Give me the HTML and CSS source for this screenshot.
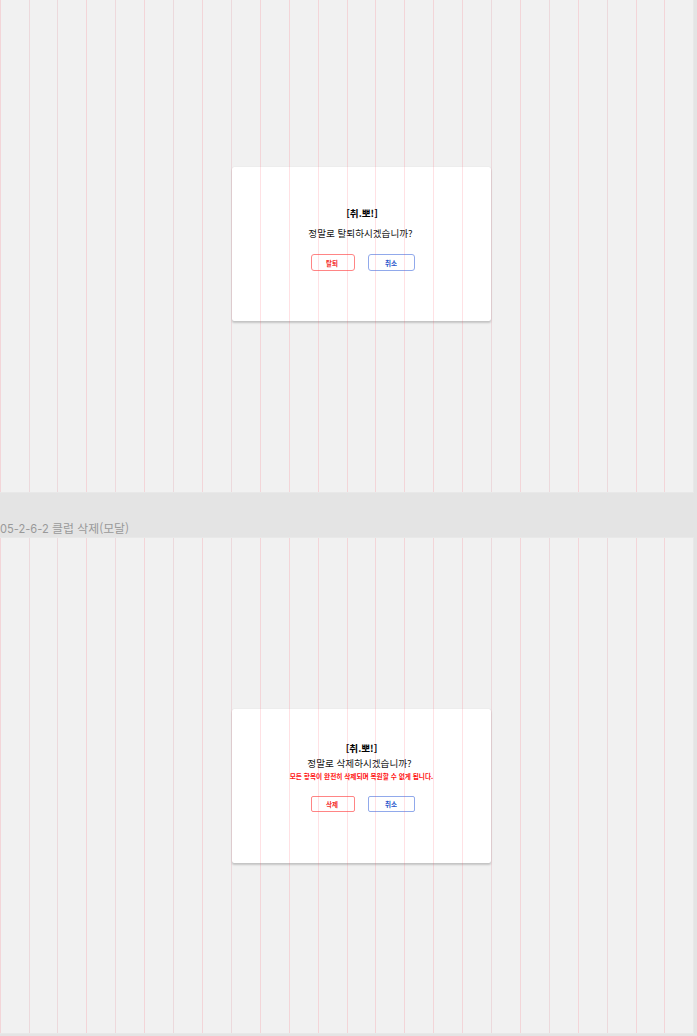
FILE: index.html
```html
<!DOCTYPE html>
<html lang="ko">
<head>
<meta charset="utf-8">
<title>클럽 모달</title>
<link rel="stylesheet" href="styles.css">
</head>
<body>
<section class="frame frame-leave">
  <div class="card">
    <h2 class="club">[취.뽀!]</h2>
    <p class="question">정말로 탈퇴하시겠습니까?</p>
    <div class="actions"><button class="btn danger">탈퇴</button><button class="btn cancel">취소</button></div>
  </div>
  <div class="columns"><i></i><i class="dim"></i><i class="dim"></i><i></i><i class="mid"></i><i></i><i class="dim"></i><i></i><i class="dim"></i><i></i><i></i><i></i><i></i><i></i><i></i><i></i><i></i><i class="dim"></i><i></i><i class="dim"></i><i></i><i class="dim"></i><i></i><i></i></div>
</section>
<div class="label"><span class="code">05-2-6-2</span> 클럽 삭제(모달)</div>
<section class="frame frame-delete">
  <div class="card">
    <h2 class="club">[취.뽀!]</h2>
    <p class="question">정말로 삭제하시겠습니까?</p>
    <p class="warning">모든 항목이 완전히 삭제되며 복원할 수 없게 됩니다.</p>
    <div class="actions"><button class="btn danger">삭제</button><button class="btn cancel">취소</button></div>
  </div>
  <div class="columns"><i></i><i class="dim"></i><i class="dim"></i><i></i><i class="mid"></i><i></i><i class="dim"></i><i></i><i class="dim"></i><i></i><i></i><i></i><i></i><i></i><i></i><i></i><i></i><i class="dim"></i><i></i><i class="dim"></i><i></i><i class="dim"></i><i></i><i></i></div>
</section>
</body>
</html>
```

FILE: styles.css
```css
* { box-sizing: border-box; }
body {
  margin: 0;
  height: 1036px;
  overflow: hidden;
  background: #e4e4e4;
  font-family: "Noto Sans CJK KR", sans-serif;
  color: #000;
}
.frame {
  position: relative;
  width: 693px;
  background: #f1f1f1;
  box-shadow: 0 0 0 1px #e8e8e8;
}
.frame-leave { height: 492px; padding: 167px 0 0 232px; }
.frame-delete { height: 495px; padding: 171px 0 0 232px; }
.columns {
  position: absolute;
  inset: 0;
  display: grid;
  grid-template-columns: 29px 28px repeat(10, 29px) 28px repeat(9, 29px) 28px 29px;
  pointer-events: none;
}
.columns i { border-left: 1px solid rgba(255, 70, 90, .16); }
.columns .dim { border-color: rgba(205, 70, 95, .14); }
.columns .mid { border-color: rgba(220, 70, 95, .14); }
.card {
  width: 259px;
  height: 154px;
  display: flex;
  flex-direction: column;
  align-items: center;
  background: #fff;
  border-radius: 2px;
  box-shadow: 0 2px 2px rgba(0, 0, 0, .18), 0 0 1px rgba(0, 0, 0, .16);
}
.frame-leave .card { padding-top: 39px; }
.frame-delete .card { padding-top: 32px; }
.club { margin: 0 0 0 1px; font-size: 9.6px; line-height: 14px; font-weight: 700; }
.question { margin: 0 0 0 -2px; font-size: 9.6px; line-height: 14px; color: #151515; }
.warning { margin: 0; font-size: 6.65px; line-height: 10px; font-weight: 700; color: #ff1212; white-space: nowrap; }
.frame-leave .question { margin-top: 6px; }
.frame-delete .question { margin: 1px 0 0 -4px; }
.frame-delete .warning { margin-top: 1px; }
.frame-delete .actions { margin-top: 15px; }
.frame-delete .club { margin-left: 0; }
.actions { display: flex; gap: 13px; margin: 14px 0 0 3px; }
.btn {
  height: 17px;
  padding: 0;
  border: 1px solid;
  border-radius: 3px;
  background: transparent;
  font: 700 6.5px/14px "Noto Sans CJK KR", sans-serif;
}
.frame-delete .btn { height: 16px; border-radius: 2px; }
.danger { width: 44px; color: #f42b2b; border-color: #ff8585; padding-right: 2px; }
.cancel { width: 47px; color: #2854cb; border-color: #91a9eb; padding-right: 1px; }
.label {
  height: 46px;
  padding-top: 27px;
  font: 11.9px/18px "Noto Sans CJK KR", sans-serif;
  color: #999;
  white-space: nowrap;
}
.code { font: 11.1px/18px Inter, sans-serif; }
```
